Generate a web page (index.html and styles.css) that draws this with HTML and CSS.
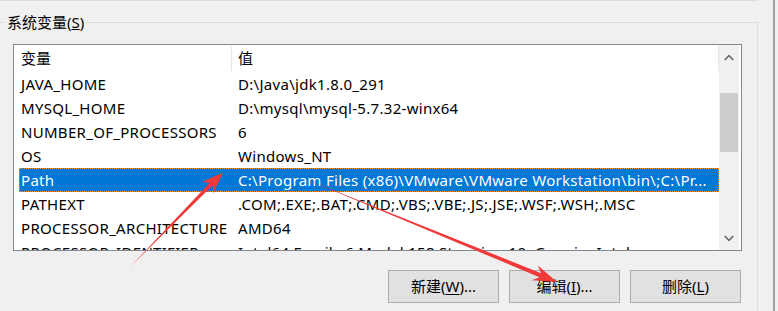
FILE: index.html
```html
<!DOCTYPE html>
<html>
<head>
    <meta charset="utf-8"/>
    <link rel="stylesheet" href="styles.css">
</head>
<body>
<div class="screen">
    <div class="main">
        <div class="panel">
            <div class="group">
                <div class="group-title">系统变量(<u>S</u>)</div>
                <div class="list">
                    <div class="table">
                        <div class="head">
                            <div class="th th-name">变量</div>
                            <div class="th th-value">值</div>
                        </div>
                        <div class="row"><div class="name">JAVA_HOME</div><div class="value">D:\Java\jdk1.8.0_291</div></div>
                        <div class="row"><div class="name">MYSQL_HOME</div><div class="value">D:\mysql\mysql-5.7.32-winx64</div></div>
                        <div class="row"><div class="name">NUMBER_OF_PROCESSORS</div><div class="value">6</div></div>
                        <div class="row"><div class="name">OS</div><div class="value">Windows_NT</div></div>
                        <div class="row selected"><div class="name">Path</div><div class="value">C:\Program Files (x86)\VMware\VMware Workstation\bin\;C:\Pr...</div></div>
                        <div class="row"><div class="name">PATHEXT</div><div class="value">.COM;.EXE;.BAT;.CMD;.VBS;.VBE;.JS;.JSE;.WSF;.WSH;.MSC</div></div>
                        <div class="row"><div class="name">PROCESSOR_ARCHITECTURE</div><div class="value">AMD64</div></div>
                        <div class="row"><div class="name">PROCESSOR_IDENTIFIER</div><div class="value">Intel64 Family 6 Model 158 Stepping 10, GenuineIntel</div></div>
                    </div>
                    <div class="vscroll">
                        <div class="sb-arrow">
                            <svg width="10" height="7" viewBox="0 0 10 7"><path d="M0.8 6 L5 1.6 L9.2 6" fill="none" stroke="#606060" stroke-width="1.5"/></svg>
                        </div>
                        <div class="sb-gap"></div>
                        <div class="sb-thumb"></div>
                        <div class="sb-fill"></div>
                        <div class="sb-arrow">
                            <svg width="10" height="7" viewBox="0 0 10 7"><path d="M0.8 1 L5 5.4 L9.2 1" fill="none" stroke="#606060" stroke-width="1.5"/></svg>
                        </div>
                    </div>
                </div>
                <div class="buttons">
                    <div class="btn">新建(<u>W</u>)...</div>
                    <div class="btn">编辑(<u>I</u>)...</div>
                    <div class="btn">删除(<u>L</u>)</div>
                </div>
            </div>
        </div>
    </div>
    <div class="edge"></div>
</div>

<svg class="marks" width="778" height="311" viewBox="0 0 778 311">
    <polygon points="131,266 212.5,185.6 213.3,193.3 223,172.5 201.9,182.1 209.7,182.8" fill="#f03a3a"/>
    <polygon points="308,180 539.5,277.2 531.8,280.3 557,282 537.8,265.5 541.1,273.2" fill="#f03a3a"/>
</svg>
</body>
</html>
```

FILE: styles.css
```css
body {
    margin: 0;
    background: #f0f0f0;
    font-family: 'Noto Sans', 'Noto Sans CJK SC', sans-serif;
    font-size: 15px;
    color: #000;
    position: relative;
}

.screen {
    display: flex;
    width: 778px;
    height: 311px;
    overflow: hidden;
}

.main {
    width: 773px;
}

.edge {
    width: 2px;
    background: #a0a0a0;
}

.panel {
    width: 758px;
    border-top: 1px solid #dcdcdc;
}

.group {
    margin-top: 21px;
    height: 290px;
    border-top: 1px solid #dcdcdc;
    border-right: 1px solid #dcdcdc;
}

.group-title {
    width: fit-content;
    margin: -11px 0 0 5px;
    padding: 0 2px;
    line-height: 21px;
    height: 21px;
    background: #f0f0f0;
}

.list {
    display: flex;
    margin: 11px 0 0 13px;
    width: 727px;
    height: 205px;
    border: 1px solid #828790;
    background: #fff;
}

.table {
    flex: 1;
    overflow: hidden;
}

.head {
    display: flex;
    height: 27px;
}

.th {
    box-sizing: border-box;
    margin: 1px 0;
    height: 25px;
    line-height: 25px;
    border-right: 1px solid #e5e5e5;
}

.th-name {
    width: 218px;
    padding-left: 7px;
}

.th-value {
    flex: 1;
    padding-left: 6px;
}

.row {
    display: flex;
    margin-left: 5px;
    height: 24px;
    box-sizing: border-box;
    line-height: 22px;
    border: 1px solid transparent;
    white-space: nowrap;
    letter-spacing: 0.3px;
}

.row .name {
    box-sizing: border-box;
    width: 218px;
    padding-left: 1px;
}

.row .value {
    flex: 1;
    overflow: hidden;
}

.row.selected {
    background: #0078d7;
    color: #fff;
    border: 1px dotted #f29a3c;
}

.vscroll {
    width: 20px;
    margin-right: 2px;
    display: flex;
    flex-direction: column;
    background: #f0f0f0;
}

.sb-arrow {
    height: 24px;
    display: flex;
    align-items: center;
    justify-content: center;
}

.sb-arrow svg {
    display: block;
}

.sb-gap {
    height: 24px;
}

.sb-thumb {
    height: 59px;
    margin: 0 1px;
    background: #cdcdcd;
}

.sb-fill {
    flex: 1;
}

.buttons {
    display: flex;
    justify-content: flex-end;
    gap: 10px;
    margin-top: 19px;
    padding-right: 16px;
}

.btn {
    box-sizing: border-box;
    width: 111px;
    height: 33px;
    line-height: 31px;
    text-align: center;
    border: 1px solid #adadad;
    background: #e1e1e1;
}

.btn u {
    text-underline-offset: 2px;
}

.marks {
    position: absolute;
    top: 0;
    left: 0;
    pointer-events: none;
}
```
